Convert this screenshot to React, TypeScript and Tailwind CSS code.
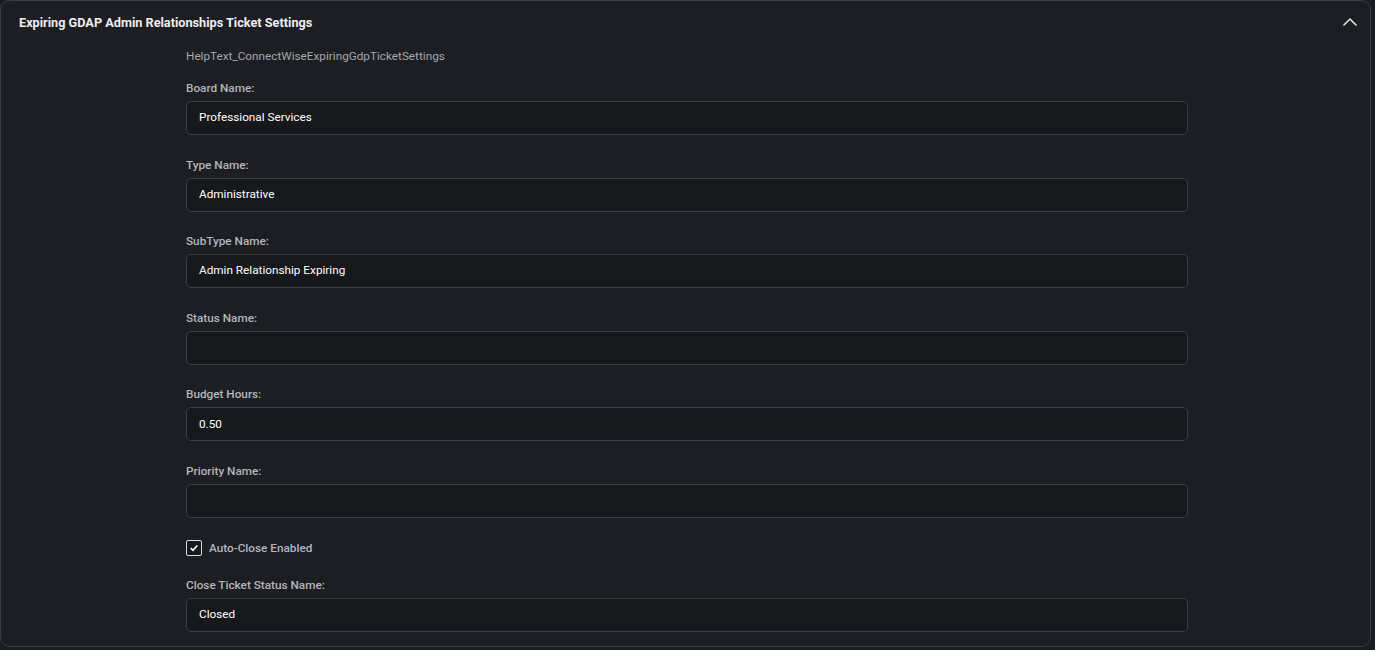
import React from 'react';

const fields: { label: string; value: string }[] = [
  { label: 'Board Name:', value: 'Professional Services' },
  { label: 'Type Name:', value: 'Administrative' },
  { label: 'SubType Name:', value: 'Admin Relationship Expiring' },
  { label: 'Status Name:', value: '' },
  { label: 'Budget Hours:', value: '0.50' },
  { label: 'Priority Name:', value: '' },
];

function Field({ label, value }: { label: string; value: string }) {
  return (
    <div className="flex flex-col">
      <label className="text-[11.75px] leading-4 font-medium text-[#b3b6bc]">{label}</label>
      <div className="mt-[5px] h-[34px] rounded-[5px] border border-[#3b3c42] bg-[#17181c] px-[12px] flex items-center text-[11.75px] text-white">
        {value}
      </div>
    </div>
  );
}

export default function App() {
  return (
    <div className="min-h-[650px] bg-[#1c1d22] pr-[4px] pb-[2px]" style={{ fontFamily: 'Roboto, "Liberation Sans", sans-serif' }}>
      <div className="w-[1371px] rounded-[10px] border border-[#3a3b41] bg-[#1d1e23]">
        <div className="h-[44px] pl-[18px] pr-[12px] flex items-center justify-between">
          <h2 className="text-[12.7px] font-bold text-[#eceef1]">Expiring GDAP Admin Relationships Ticket Settings</h2>
          <svg width="16" height="16" viewBox="0 0 16 16" className="text-[#e6e8ec]">
            <polyline points="1.5,10.5 8,4 14.5,10.5" fill="none" stroke="currentColor" strokeWidth="1.5" />
          </svg>
        </div>
        <div className="ml-[185px] w-[1002px] pb-[14px] flex flex-col">
          <p className="mt-[3px] text-[11.75px] leading-4 text-[#a4a7ad]">HelpText_ConnectWiseExpiringGdpTicketSettings</p>
          <div className="mt-[16px] flex flex-col gap-[21.6px]">
            {fields.map(f => (
              <Field key={f.label} label={f.label} value={f.value} />
            ))}
            <div className="flex items-center gap-[7px]">
              <span className="w-[16px] h-[16px] rounded-[2px] border border-[#d9dbe0] bg-[#17181c] flex items-center justify-center">
                <svg width="10" height="10" viewBox="0 0 10 10">
                  <polyline points="1.8,5.2 4,7.3 8.3,2.5" fill="none" stroke="#ffffff" strokeWidth="1.6" />
                </svg>
              </span>
              <span className="text-[11.75px] leading-4 font-medium text-[#b3b6bc]">Auto-Close Enabled</span>
            </div>
            <Field label="Close Ticket Status Name:" value="Closed" />
          </div>
        </div>
      </div>
    </div>
  );
}
